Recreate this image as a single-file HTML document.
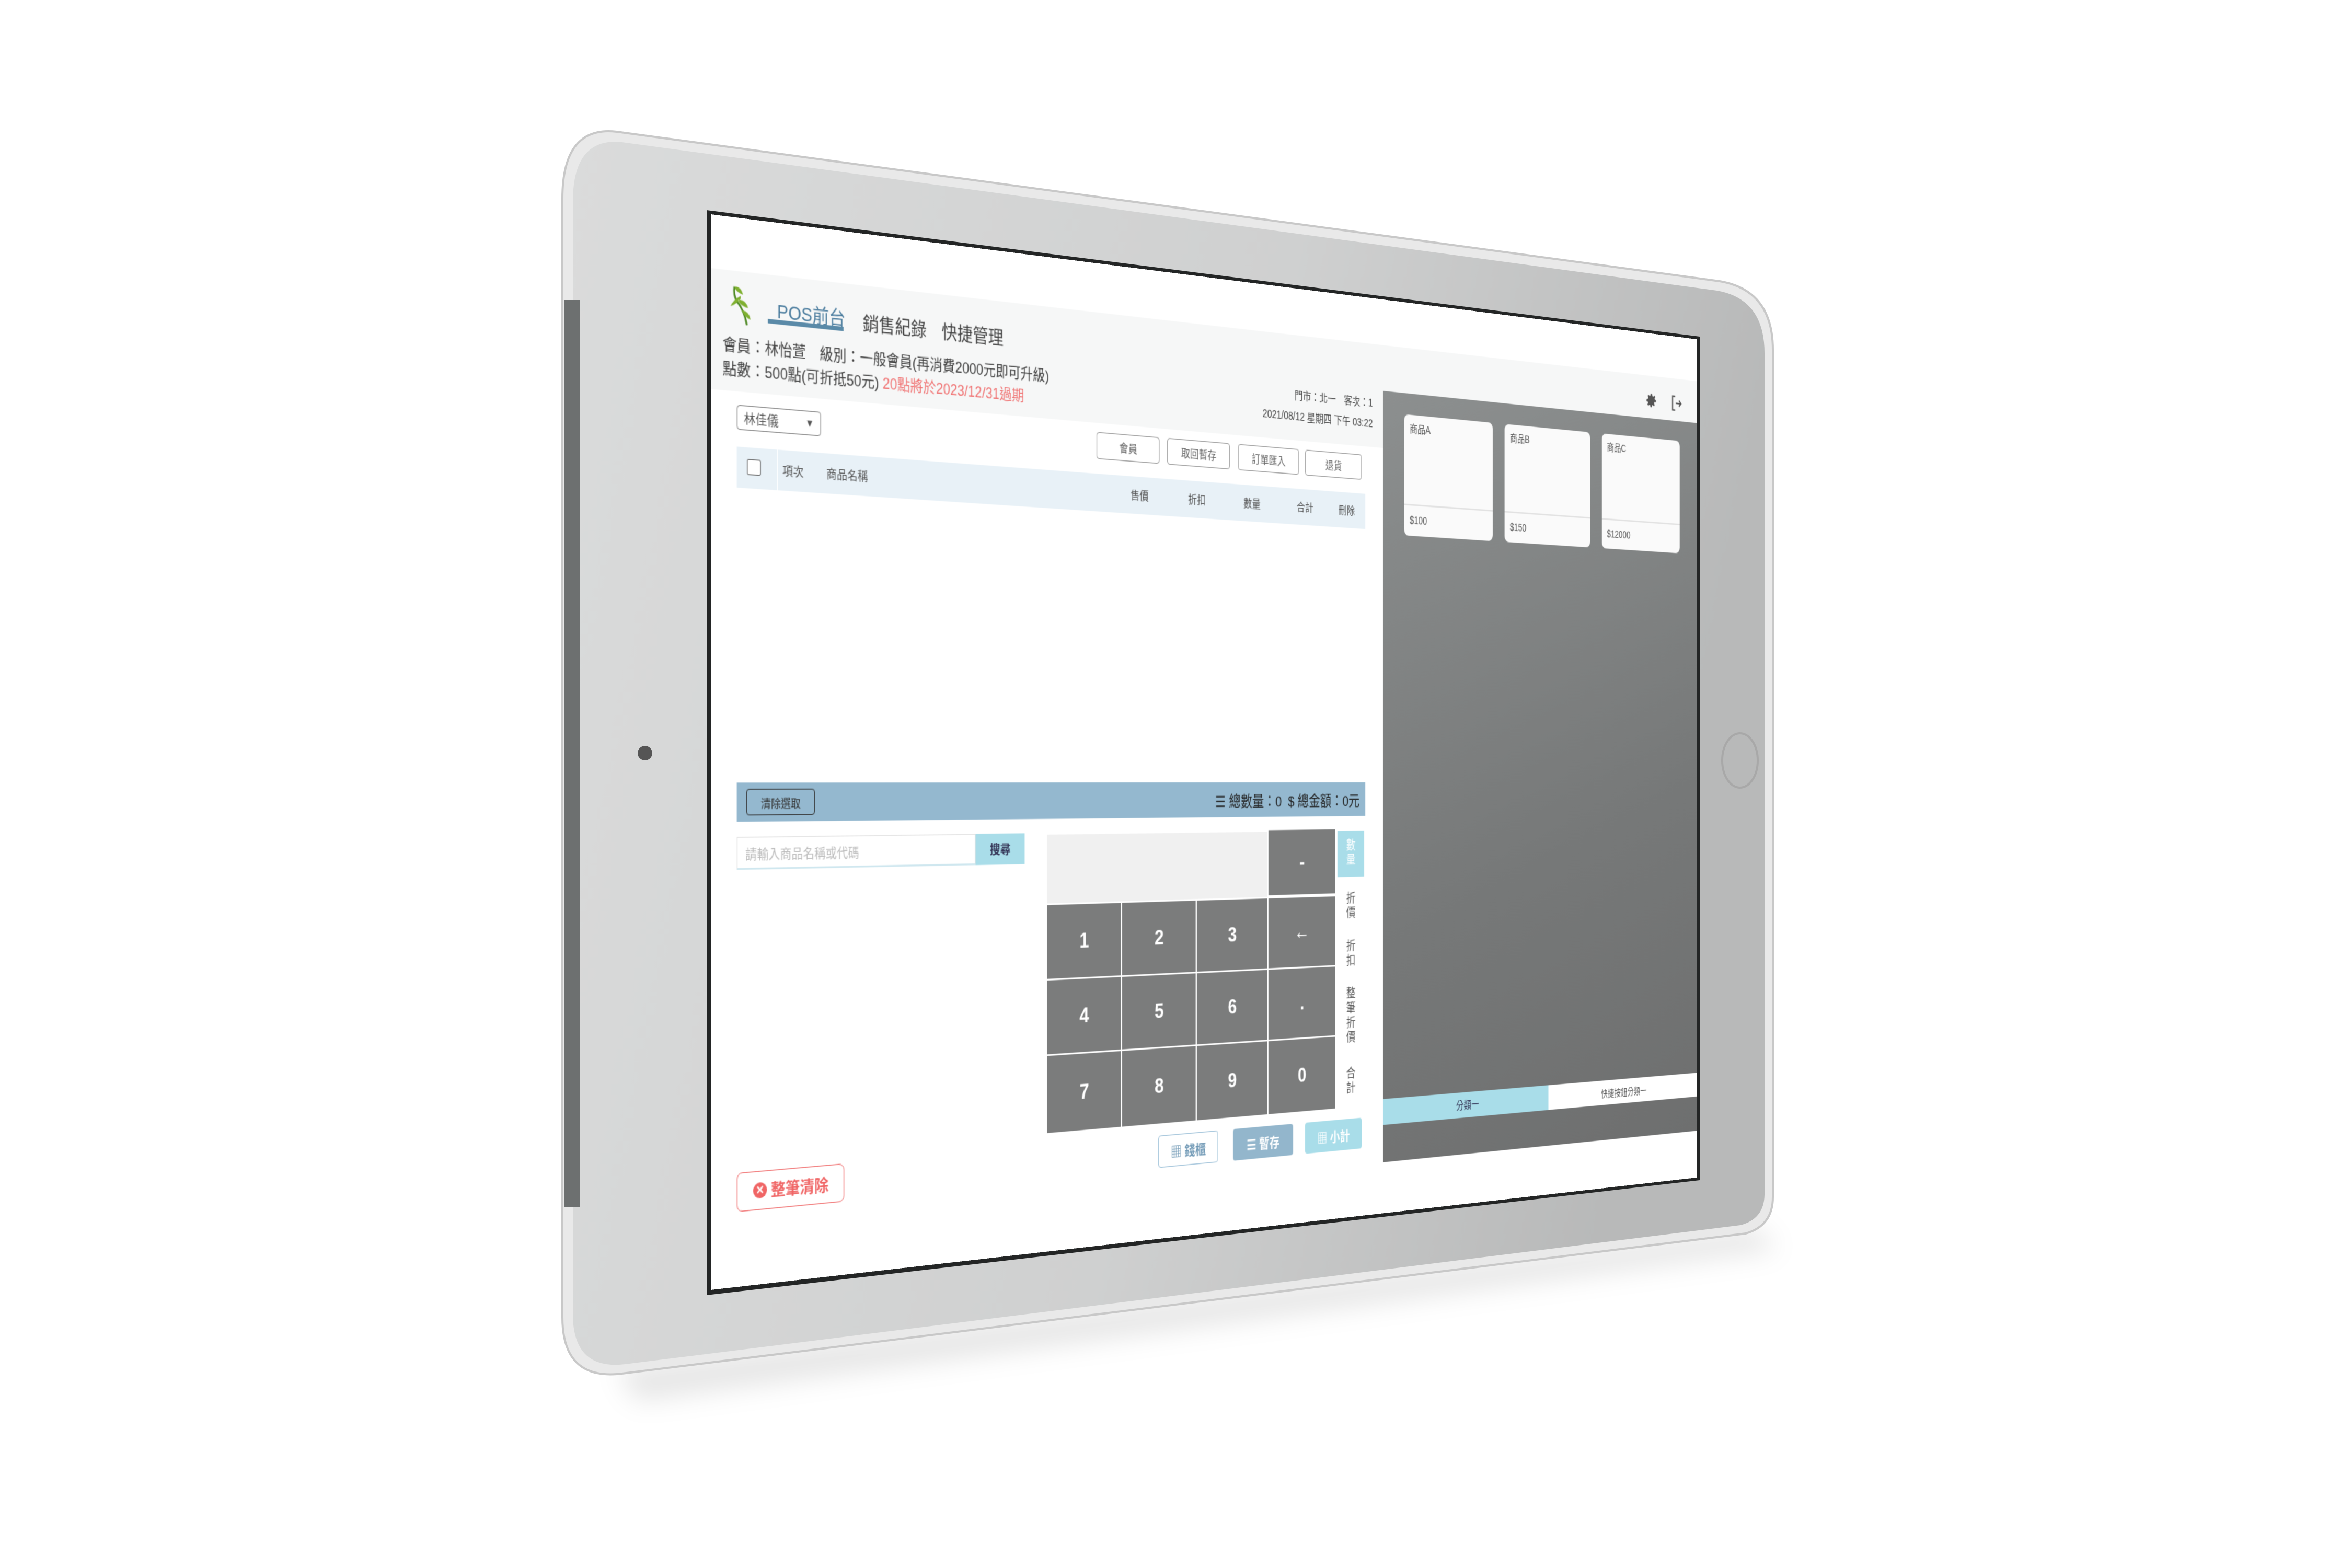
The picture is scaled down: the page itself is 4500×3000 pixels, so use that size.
<!DOCTYPE html>
<html><head><meta charset="utf-8"><style>
html,body{margin:0;padding:0;width:4500px;height:3000px;background:#fff;overflow:hidden}
*{box-sizing:border-box}
#screen{position:absolute;left:0;top:0;width:1600px;height:1200px;background:#fff;transform-origin:0 0;
transform:matrix3d(1.75297,0.264181,0,0.0001769, 0,1.715,0,0, 0,0,1,0, 1360,410,0,1);
font-family:"Liberation Sans","Noto Sans CJK TC",sans-serif;color:#444;overflow:hidden}
.a{position:absolute}
.btn{position:absolute;border:1.5px solid #9a9a9a;border-radius:4px;color:#666;font-size:14px;display:flex;align-items:center;justify-content:center;background:#fff}
.th{position:absolute;top:270px;font-size:14px;color:#555}
.k{position:absolute;background:#7b7c7c;color:#fff;font-size:26px;font-weight:bold;display:flex;align-items:center;justify-content:center}
.vl{position:absolute;left:922px;width:46px;font-size:16px;color:#555;text-align:center;line-height:19px}
.card{position:absolute;top:148px;height:160px;background:#fafafa;border-radius:8px}
.card .n{position:absolute;left:10px;top:8px;font-size:14px;color:#555}
.card .l{position:absolute;left:0;right:0;top:118px;height:2px;background:#e2e2e2}
.card .p{position:absolute;left:10px;top:131px;font-size:14px;color:#555}
</style></head><body>
<svg width="4500" height="3000" style="position:absolute;left:0;top:0">
<defs>
<linearGradient id="bz" x1="0" y1="0" x2="1" y2="0.2">
<stop offset="0" stop-color="#dadbdb"/><stop offset="0.6" stop-color="#cfd0d0"/><stop offset="1" stop-color="#b8b9b9"/></linearGradient>
<filter id="bl" x="-20%" y="-50%" width="140%" height="200%"><feGaussianBlur stdDeviation="25"/></filter>
</defs>
<path d="M1180 2620 L3360 2350 L3400 2390 L1220 2680 Z" fill="rgba(0,0,0,0.10)" filter="url(#bl)"/>
<path d="M1180 252 L3290 538 Q3392 555 3392 670 L3392 2290 Q3392 2345 3340 2360 L1190 2628 Q1076 2642 1076 2520 L1076 380 Q1076 240 1180 252 Z" fill="#e9e9e9" stroke="#c8c8c8" stroke-width="4"/>
<path d="M1190 272 L3285 556 Q3376 572 3376 676 L3376 2284 Q3376 2332 3330 2344 L1196 2610 Q1096 2622 1096 2514 L1096 386 Q1096 262 1190 272 Z" fill="url(#bz)"/>
<rect x="1079" y="574" width="30" height="1736" fill="#6d7070"/>
<circle cx="1234" cy="1441" r="14" fill="#555"/>
<ellipse cx="3329" cy="1455" rx="34" ry="52" fill="none" stroke="#a8a8a8" stroke-width="4"/>
<path d="M1352 402 L3252 644 L3252 2258 L1352 2478 Z" fill="#232525"/>
</svg>
<div id="screen">
<div class="a" style="left:0;top:60px;width:1600px;height:60px;background:#f6f7f7"></div>
<div class="a" style="left:0;top:120px;width:1001px;height:75px;background:#f6f7f7"></div>
<svg class="a" style="left:22px;top:70px" width="40" height="54" viewBox="0 0 50 64"><path d="M30 60 Q26 40 14 28 Q8 20 10 8" stroke="#4f8a25" stroke-width="3" fill="none"/><path d="M10 8 Q20 6 24 18 Q16 16 12 12Z M16 26 Q28 24 32 36 Q22 34 18 30Z M22 40 Q34 40 36 52 Q28 50 24 44Z M20 20 Q8 26 4 36 Q14 32 20 24Z" fill="#7fb030"/></svg>
<div class="a" style="left:85px;top:83px;font-size:22px;color:#4a7c9e">POS前台</div>
<div class="a" style="left:73px;top:110px;width:100px;height:5px;background:#5a8aa8"></div>
<div class="a" style="left:199px;top:86px;font-size:22px;color:#444">銷售紀錄</div>
<div class="a" style="left:308px;top:86px;font-size:22px;color:#444">快捷管理</div>
<div class="a" style="left:15px;top:130px;font-size:18px;color:#444;white-space:nowrap">會員：林怡萱　級別：一般會員(再消費2000元即可升級)</div>
<div class="a" style="left:15px;top:157px;font-size:18px;color:#444;white-space:nowrap">點數：500點(可折抵50元) <span style="color:#f07373">20點將於2023/12/31過期</span></div>
<div class="a" style="left:700px;width:283px;top:127px;font-size:14px;color:#444;text-align:right;white-space:nowrap">門市：北一　客次：1</div>
<div class="a" style="left:700px;width:283px;top:154px;font-size:14px;color:#444;text-align:right;white-space:nowrap">2021/08/12 星期四 下午 03:22</div>
<svg class="a" style="left:1494px;top:82px" width="26" height="26" viewBox="0 0 24 24"><path fill="#555" d="M12 8a4 4 0 1 0 0 8 4 4 0 0 0 0-8zm9 5.2v-2.4l-2.4-.5-.6-1.5 1.4-2-1.7-1.7-2 1.4-1.5-.6L13.2 3h-2.4l-.5 2.4-1.5.6-2-1.4-1.7 1.7 1.4 2-.6 1.5L3 10.8v2.4l2.4.5.6 1.5-1.4 2 1.7 1.7 2-1.4 1.5.6.5 2.4h2.4l.5-2.4 1.5-.6 2 1.4 1.7-1.7-1.4-2 .6-1.5z"/></svg>
<svg class="a" style="left:1546px;top:82px" width="26" height="26" viewBox="0 0 24 24" fill="none" stroke="#555" stroke-width="2"><path d="M9 3H4v18h5M10 12h10M16 8l4 4-4 4"/></svg>
<div class="btn" style="left:33px;top:210px;width:110px;height:28px;justify-content:space-between;padding:0 8px;border-color:#888;color:#555;font-size:15px"><span>林佳儀</span><span style="font-size:12px">▼</span></div>
<div class="btn" style="left:534px;top:206px;width:97px;height:33px">會員</div>
<div class="btn" style="left:643px;top:206px;width:100px;height:33px">取回暫存</div>
<div class="btn" style="left:756px;top:206px;width:101px;height:33px">訂單匯入</div>
<div class="btn" style="left:867px;top:206px;width:97px;height:33px">退貨</div>
<div class="a" style="left:33px;top:257px;width:937px;height:46px;background:#e8f1f7"></div>
<div class="a" style="left:85px;top:257px;width:1px;height:46px;background:#fff"></div>
<div class="a" style="left:46px;top:270px;width:18px;height:18px;border:1.5px solid #666;border-radius:2px;background:#fff"></div>
<div class="th" style="left:92px">項次</div>
<div class="th" style="left:150px">商品名稱</div>
<div class="th" style="left:586px">售價</div>
<div class="th" style="left:676px">折扣</div>
<div class="th" style="left:765px">數量</div>
<div class="th" style="left:853px">合計</div>
<div class="th" style="left:924px">刪除</div>
<div class="a" style="left:33px;top:634px;width:937px;height:44px;background:#94b8cf"></div>
<div class="btn" style="left:45px;top:641px;width:90px;height:30px;border-color:#333;color:#333;font-size:13px;background:transparent">清除選取</div>
<div class="a" style="left:500px;width:460px;top:644px;font-size:19px;color:#222;text-align:right;white-space:nowrap">☰ 總數量：0 &nbsp;$ 總金額：0元</div>
<div class="a" style="left:33px;top:695px;width:323px;height:37px;border:1px solid #e2e2e2;border-bottom:2px solid #cfe7ef;font-size:15px;color:#bbb;padding:8px 10px">請輸入商品名稱或代碼</div>
<div class="a" style="left:356px;top:695px;width:71px;height:37px;background:#a9dde9;color:#335;font-size:15px;font-weight:bold;display:flex;align-items:center;justify-content:center">搜尋</div>
<div class="a" style="left:460px;top:695px;width:458px;height:362px;background:#fff"></div>
<div class="a" style="left:460px;top:697px;width:344px;height:83px;background:#f0f0f0"></div>
<div class="k" style="left:806px;top:695px;width:112px;height:83px">-</div>
<div class="k" style="left:460px;top:782px;width:111px;height:89px">1</div>
<div class="k" style="left:573px;top:782px;width:115px;height:89px">2</div>
<div class="k" style="left:690px;top:782px;width:114px;height:89px">3</div>
<div class="k" style="left:806px;top:782px;width:112px;height:89px">←</div>
<div class="k" style="left:460px;top:873px;width:111px;height:89px">4</div>
<div class="k" style="left:573px;top:873px;width:115px;height:89px">5</div>
<div class="k" style="left:690px;top:873px;width:114px;height:89px">6</div>
<div class="k" style="left:806px;top:873px;width:112px;height:89px">.</div>
<div class="k" style="left:460px;top:964px;width:111px;height:93px">7</div>
<div class="k" style="left:573px;top:964px;width:115px;height:93px">8</div>
<div class="k" style="left:690px;top:964px;width:114px;height:93px">9</div>
<div class="k" style="left:806px;top:964px;width:112px;height:93px">0</div>
<div class="vl" style="top:697px;height:60px;background:#a9dde9;color:#fff;padding-top:10px">數<br>量</div>
<div class="vl" style="top:776px">折<br>價</div>
<div class="vl" style="top:838px">折<br>扣</div>
<div class="vl" style="top:900px">整<br>筆<br>折<br>價</div>
<div class="vl" style="top:1004px">合<br>計</div>
<div class="btn" style="left:629px;top:1072px;width:95px;height:40px;border-color:#9cc0d8;color:#6f98b5;font-size:17px;font-weight:bold">▦ 錢櫃</div>
<div class="btn" style="left:748px;top:1072px;width:99px;height:40px;border:none;background:#93b6cc;color:#fff;font-size:17px;font-weight:bold">☰ 暫存</div>
<div class="btn" style="left:867px;top:1072px;width:97px;height:40px;border:none;background:#a9dde9;color:#fff;font-size:17px;font-weight:bold">▦ 小計</div>
<div class="btn" style="left:33px;top:1072px;width:141px;height:44px;border-color:#f07070;border-radius:7px;color:#f06565;font-size:19px;font-weight:bold"><span style="display:inline-block;width:18px;height:18px;border-radius:50%;background:#f06565;color:#fff;font-size:13px;line-height:18px;text-align:center;margin-right:5px">✕</span>整筆清除</div>
<div class="a" style="left:1001px;top:120px;width:599px;height:1013px;background:linear-gradient(160deg,#8c8f8f,#767878 60%,#6e6f6f)"></div>
<div class="card" style="left:1038px;width:161px"><div class="n">商品A</div><div class="l"></div><div class="p">$100</div></div>
<div class="card" style="left:1221px;width:164px"><div class="n">商品B</div><div class="l"></div><div class="p">$150</div></div>
<div class="card" style="left:1408px;width:157px"><div class="n">商品C</div><div class="l"></div><div class="p">$12000</div></div>
<div class="a" style="left:1001px;top:1050px;width:303px;height:34px;background:#a9dde9;color:#335;font-size:14px;display:flex;align-items:center;justify-content:center">分類一</div>
<div class="a" style="left:1304px;top:1050px;width:296px;height:34px;background:#fff;color:#555;font-size:13px;display:flex;align-items:center;justify-content:center">快捷按鈕分類一</div>
</div>
</body></html>
